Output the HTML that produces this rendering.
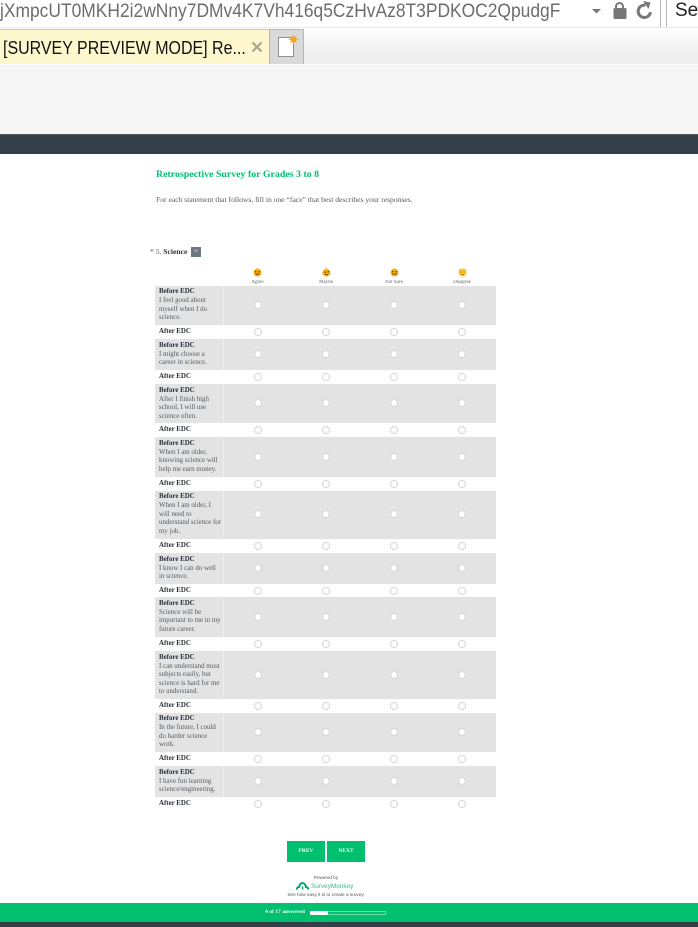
<!DOCTYPE html>
<html><head><meta charset="utf-8"><title>Survey</title>
<style>
html,body{margin:0;padding:0;background:#fff}
#p{position:relative;width:698px;height:927px;overflow:hidden;background:#fff;font-family:"Liberation Serif",serif}
#p div{position:absolute}
.ui{font-family:"Liberation Sans",sans-serif;white-space:nowrap}
.g{left:155px;width:341px;background:#e3e3e3}
.g:after{content:"";position:absolute;left:68px;top:0;bottom:0;width:1px;background:#eee}
.l{left:159px;width:66px;margin-top:1px;font-size:6.9px;line-height:8.6px;color:#555b60;white-space:nowrap;filter:blur(.25px)}
.l b{color:#2b3138;position:relative;top:-.5px}
.r{width:8px;height:8px;box-sizing:border-box;border:1px solid #d3d7d7;border-radius:50%;background:#fff;margin-left:-.5px}
.h{font-size:5px;color:#666;width:68px;text-align:center;top:279px;white-space:nowrap;filter:blur(.2px)}
.f{position:absolute;top:268px}
.blur{filter:blur(.25px)}
</style></head><body><div id="p">

<div style="left:0;top:0;width:698px;height:27px;background:#fff"></div>
<div style="left:-2px;top:-6px;width:661px;height:32px;border:1px solid #b5b5b5;background:#fff"></div>
<div style="left:666px;top:-6px;width:40px;height:32px;border:1px solid #b5b5b5;background:#fff"></div>
<div class="ui" style="left:0;top:-3px;font-size:19.5px;line-height:28px;color:#6d6d6d;transform-origin:0 0;transform:scaleX(.893)">jXmpcUT0MKH2i2wNny7DMv4K7Vh416q5CzHvAz8T3PDKOC2QpudgF</div>
<div class="ui" style="left:675px;top:-3px;font-size:19px;line-height:28px;color:#222">Sea</div>
<svg style="position:absolute;left:590px;top:0" width="70" height="22" viewBox="0 0 70 22">
<path d="M2 9h9l-4.500 4.500z" fill="#777"/>
<path d="M26 9V6.500a3.500 3.500 0 0 1 7 0V9" fill="none" stroke="#777" stroke-width="2"/>
<rect x="23.500" y="8" width="13" height="11" rx="1.500" fill="#777"/>
<path d="M55.500 5.200a6.200 6.200 0 1 0 5 7" fill="none" stroke="#777" stroke-width="3"/>
<path d="M53 1l7.500 1.500-2 6.500z" fill="#777"/>
</svg>

<div style="left:0;top:27px;width:698px;height:1px;background:#e8e8e8"></div>
<div style="left:0;top:28px;width:698px;height:36px;background:linear-gradient(#fff,#f0f0f0 60%,#eeeeee)"></div>
<div style="left:0;top:29px;width:269px;height:35px;background:#fff8cf;border-top:1px solid #c4c4c4;box-sizing:border-box"></div>
<div class="ui" style="left:3px;top:37px;font-size:18px;line-height:22px;color:#111;transform-origin:0 0;transform:scaleX(.888)">[SURVEY PREVIEW MODE] Re...</div>
<svg style="position:absolute;left:251px;top:41px" width="12" height="12" viewBox="0 0 12 12"><path d="M1.500 1.500l9 9M10.500 1.500l-9 9" stroke="#a9a48e" stroke-width="2.200"/></svg>
<div style="left:269px;top:29px;width:35px;height:35px;background:#d9d9d9;border:1px solid #b8b8b8;border-bottom:0;box-sizing:border-box"></div>
<div style="left:278px;top:37px;width:16px;height:20px;background:#fff;border:1px solid #8e8e8e;box-sizing:border-box"></div>
<svg style="position:absolute;left:288px;top:34px" width="11" height="11" viewBox="0 0 13 13"><path d="M6.500 0l1 4 3-2.500-1.500 3.500 4 1.500-4 1 2 3.500-3.500-2-1 3.500-1-3.500-3.500 2 2-3.500-4-1 4-1.500L2.500 1.500l3 2.500z" fill="#f9a51e"/><circle cx="6.500" cy="6.500" r="3.500" fill="#f9a51e"/></svg>

<div style="left:0;top:64px;width:698px;height:70px;background:#f6f6f6;border-top:1px solid #fafafa;box-sizing:border-box"></div>
<div style="left:0;top:134px;width:698px;height:20px;background:#333e48;border-top:1px solid #555;box-sizing:border-box"></div>

<div class="blur" style="left:156px;top:169px;font-size:9.9px;line-height:12px;font-weight:bold;color:#00bf6f;white-space:nowrap">Retrospective Survey for Grades 3 to 8</div>
<div class="blur" style="left:156px;top:195px;font-size:7.6px;line-height:10px;color:#545b62;white-space:nowrap">For each statement that follows, fill in one “face” that best describes your responses.</div>

<div class="blur" style="left:150px;top:247px;font-size:7.6px;line-height:10px;color:#545b62;white-space:nowrap">* 5. <b style="color:#2b3138">Science</b></div>
<div style="left:191px;top:247px;width:10px;height:10px;background:#6b7880;color:#dfe3e5;font-size:5px;line-height:10px;text-align:center">w</div>

<svg class="f" style="left:253px" width="9" height="9" viewBox="0 0 9 9"><circle cx="4.500" cy="4.500" r="4" fill="#f7b116"/><rect x="2" y="3" width="1.500" height="1.500" fill="#7a4a10"/><rect x="5.500" y="3" width="1.500" height="1.500" fill="#7a4a10"/><path d="M2 5.500h5L6 7H3z" fill="#a8600f"/></svg>
<svg class="f" style="left:322px" width="9" height="9" viewBox="0 0 9 9"><path d="M4.500 0l1.500 1.500 2 .5v2.500L9 6 6 8 4 9 2 7.500 0 6 1 2.500z" fill="#f7b116"/><rect x="2.500" y="3.500" width="1.500" height="1.500" fill="#7a4a10"/><rect x="5.500" y="3" width="1.500" height="1.500" fill="#7a4a10"/><rect x="3" y="6" width="3" height="1" fill="#7a4a10"/></svg>
<svg class="f" style="left:390px" width="9" height="9" viewBox="0 0 9 9"><circle cx="4.500" cy="4.500" r="4" fill="#f7b116"/><rect x="2" y="3" width="1.500" height="1.300" fill="#7a4a10"/><rect x="5.500" y="3" width="1.500" height="1.300" fill="#7a4a10"/><rect x="2" y="5.500" width="5" height="1" fill="#7a4a10"/></svg>
<svg class="f" style="left:458px" width="9" height="9" viewBox="0 0 9 9"><circle cx="4.500" cy="4.500" r="4" fill="#fcc52b"/><path d="M1 1l1.500 1M8 1L6.500 2" stroke="#f7b116"/><rect x="2.500" y="3.500" width="1" height="1" fill="#9a6a10"/><rect x="5.500" y="3.500" width="1" height="1" fill="#9a6a10"/><rect x="3" y="6" width="3" height=".8" fill="#b07a10"/></svg>
<div class="h" style="left:223.500px;top:280px">Agree</div><div class="h" style="left:292px;top:280px">Maybe</div><div class="h" style="left:360px;top:280px">Not Sure</div><div class="h" style="left:428px;top:280px">Disagree</div>

<div class="g" style="top:286px;height:39px"></div>
<div class="l" style="top:287.500px"><b>Before EDC</b><br>I feel good about<br>myself when I do<br>science.</div>
<div class="r" style="left:254px;top:301px"></div><div class="r" style="left:322.500px;top:301px"></div><div class="r" style="left:390.500px;top:301px"></div><div class="r" style="left:458.500px;top:301px"></div>
<div class="l" style="top:327.500px"><b>After EDC</b></div>
<div class="r" style="left:254px;top:328px"></div><div class="r" style="left:322.500px;top:328px"></div><div class="r" style="left:390.500px;top:328px"></div><div class="r" style="left:458.500px;top:328px"></div>

<div class="g" style="top:339px;height:31px"></div>
<div class="l" style="top:341px"><b>Before EDC</b><br>I might choose a<br>career in science.</div>
<div class="r" style="left:254px;top:350px"></div><div class="r" style="left:322.500px;top:350px"></div><div class="r" style="left:390.500px;top:350px"></div><div class="r" style="left:458.500px;top:350px"></div>
<div class="l" style="top:372.500px"><b>After EDC</b></div>
<div class="r" style="left:254px;top:373px"></div><div class="r" style="left:322.500px;top:373px"></div><div class="r" style="left:390.500px;top:373px"></div><div class="r" style="left:458.500px;top:373px"></div>

<div class="g" style="top:384px;height:39px"></div>
<div class="l" style="top:386px"><b>Before EDC</b><br>After I finish high<br>school, I will use<br>science often.</div>
<div class="r" style="left:254px;top:399px"></div><div class="r" style="left:322.500px;top:399px"></div><div class="r" style="left:390.500px;top:399px"></div><div class="r" style="left:458.500px;top:399px"></div>
<div class="l" style="top:425.500px"><b>After EDC</b></div>
<div class="r" style="left:254px;top:426px"></div><div class="r" style="left:322.500px;top:426px"></div><div class="r" style="left:390.500px;top:426px"></div><div class="r" style="left:458.500px;top:426px"></div>

<div class="g" style="top:437px;height:40px"></div>
<div class="l" style="top:439px"><b>Before EDC</b><br>When I am older,<br>knowing science will<br>help me earn money.</div>
<div class="r" style="left:254px;top:453px"></div><div class="r" style="left:322.500px;top:453px"></div><div class="r" style="left:390.500px;top:453px"></div><div class="r" style="left:458.500px;top:453px"></div>
<div class="l" style="top:479.500px"><b>After EDC</b></div>
<div class="r" style="left:254px;top:480px"></div><div class="r" style="left:322.500px;top:480px"></div><div class="r" style="left:390.500px;top:480px"></div><div class="r" style="left:458.500px;top:480px"></div>

<div class="g" style="top:491px;height:48px"></div>
<div class="l" style="top:492.500px"><b>Before EDC</b><br>When I am older, I<br>will need to<br>understand science for<br>my job.</div>
<div class="r" style="left:254px;top:510px"></div><div class="r" style="left:322.500px;top:510px"></div><div class="r" style="left:390.500px;top:510px"></div><div class="r" style="left:458.500px;top:510px"></div>
<div class="l" style="top:541px"><b>After EDC</b></div>
<div class="r" style="left:254px;top:541.500px"></div><div class="r" style="left:322.500px;top:541.500px"></div><div class="r" style="left:390.500px;top:541.500px"></div><div class="r" style="left:458.500px;top:541.500px"></div>

<div class="g" style="top:553px;height:31px"></div>
<div class="l" style="top:555px"><b>Before EDC</b><br>I know I can do well<br>in science.</div>
<div class="r" style="left:254px;top:564px"></div><div class="r" style="left:322.500px;top:564px"></div><div class="r" style="left:390.500px;top:564px"></div><div class="r" style="left:458.500px;top:564px"></div>
<div class="l" style="top:586px"><b>After EDC</b></div>
<div class="r" style="left:254px;top:586.500px"></div><div class="r" style="left:322.500px;top:586.500px"></div><div class="r" style="left:390.500px;top:586.500px"></div><div class="r" style="left:458.500px;top:586.500px"></div>

<div class="g" style="top:597px;height:40px"></div>
<div class="l" style="top:599px"><b>Before EDC</b><br>Science will be<br>important to me in my<br>future career.</div>
<div class="r" style="left:254px;top:613px"></div><div class="r" style="left:322.500px;top:613px"></div><div class="r" style="left:390.500px;top:613px"></div><div class="r" style="left:458.500px;top:613px"></div>
<div class="l" style="top:639.500px"><b>After EDC</b></div>
<div class="r" style="left:254px;top:640px"></div><div class="r" style="left:322.500px;top:640px"></div><div class="r" style="left:390.500px;top:640px"></div><div class="r" style="left:458.500px;top:640px"></div>

<div class="g" style="top:651px;height:48px"></div>
<div class="l" style="top:653px"><b>Before EDC</b><br>I can understand most<br>subjects easily, but<br>science is hard for me<br>to understand.</div>
<div class="r" style="left:254px;top:671px"></div><div class="r" style="left:322.500px;top:671px"></div><div class="r" style="left:390.500px;top:671px"></div><div class="r" style="left:458.500px;top:671px"></div>
<div class="l" style="top:701.500px"><b>After EDC</b></div>
<div class="r" style="left:254px;top:702px"></div><div class="r" style="left:322.500px;top:702px"></div><div class="r" style="left:390.500px;top:702px"></div><div class="r" style="left:458.500px;top:702px"></div>

<div class="g" style="top:713px;height:39px"></div>
<div class="l" style="top:714.500px"><b>Before EDC</b><br>In the future, I could<br>do harder science<br>work.</div>
<div class="r" style="left:254px;top:728px"></div><div class="r" style="left:322.500px;top:728px"></div><div class="r" style="left:390.500px;top:728px"></div><div class="r" style="left:458.500px;top:728px"></div>
<div class="l" style="top:754.500px"><b>After EDC</b></div>
<div class="r" style="left:254px;top:755px"></div><div class="r" style="left:322.500px;top:755px"></div><div class="r" style="left:390.500px;top:755px"></div><div class="r" style="left:458.500px;top:755px"></div>

<div class="g" style="top:766px;height:31px"></div>
<div class="l" style="top:768px"><b>Before EDC</b><br>I have fun learning<br>science/engineering.</div>
<div class="r" style="left:254px;top:777px"></div><div class="r" style="left:322.500px;top:777px"></div><div class="r" style="left:390.500px;top:777px"></div><div class="r" style="left:458.500px;top:777px"></div>
<div class="l" style="top:799.500px"><b>After EDC</b></div>
<div class="r" style="left:254px;top:800px"></div><div class="r" style="left:322.500px;top:800px"></div><div class="r" style="left:390.500px;top:800px"></div><div class="r" style="left:458.500px;top:800px"></div>

<div style="left:287px;top:841px;width:38px;height:21px;background:#00bf6f;color:#eafff5;font-size:5.500px;font-weight:bold;line-height:20px;text-align:center">PREV</div>
<div style="left:327px;top:841px;width:38px;height:21px;background:#00bf6f;color:#eafff5;font-size:5.500px;font-weight:bold;line-height:20px;text-align:center">NEXT</div>

<div class="ui blur" style="left:296px;top:874px;width:60px;text-align:center;font-size:4.600px;line-height:7px;color:#555">Powered by</div>
<svg style="position:absolute;left:296px;top:882px" width="13" height="9" viewBox="0 0 13 9"><path d="M1 7.500a2 2 0 0 1 2-2.500c.5-2.500 2-4 3.500-4s3 1.500 3.500 4a2 2 0 0 1 2 2.500" fill="none" stroke="#00a567" stroke-width="2"/><path d="M6.500 4.500v3" stroke="#00a567" stroke-width="1.500"/></svg>
<div class="ui blur" style="left:311px;top:882px;font-size:6.400px;line-height:9px;color:#3cb987">SurveyMonkey</div>
<div class="ui blur" style="left:276px;top:891px;width:100px;text-align:center;font-size:4.700px;line-height:7px;color:#555">See how easy it is to create a survey.</div>

<div style="left:0;top:903px;width:698px;height:19px;background:#00bf6f"></div>
<div style="left:265px;top:908px;font-size:5.600px;font-weight:bold;line-height:8px;color:#eafff5;white-space:nowrap">4 of 17 answered</div>
<div style="left:310px;top:911px;width:76px;height:4px;border:1px solid #72dcae;box-sizing:border-box"></div>
<div style="left:310px;top:911px;width:18px;height:4px;background:#fff"></div>
<div style="left:0;top:922px;width:698px;height:5px;background:#333e48"></div>
</div></body></html>
